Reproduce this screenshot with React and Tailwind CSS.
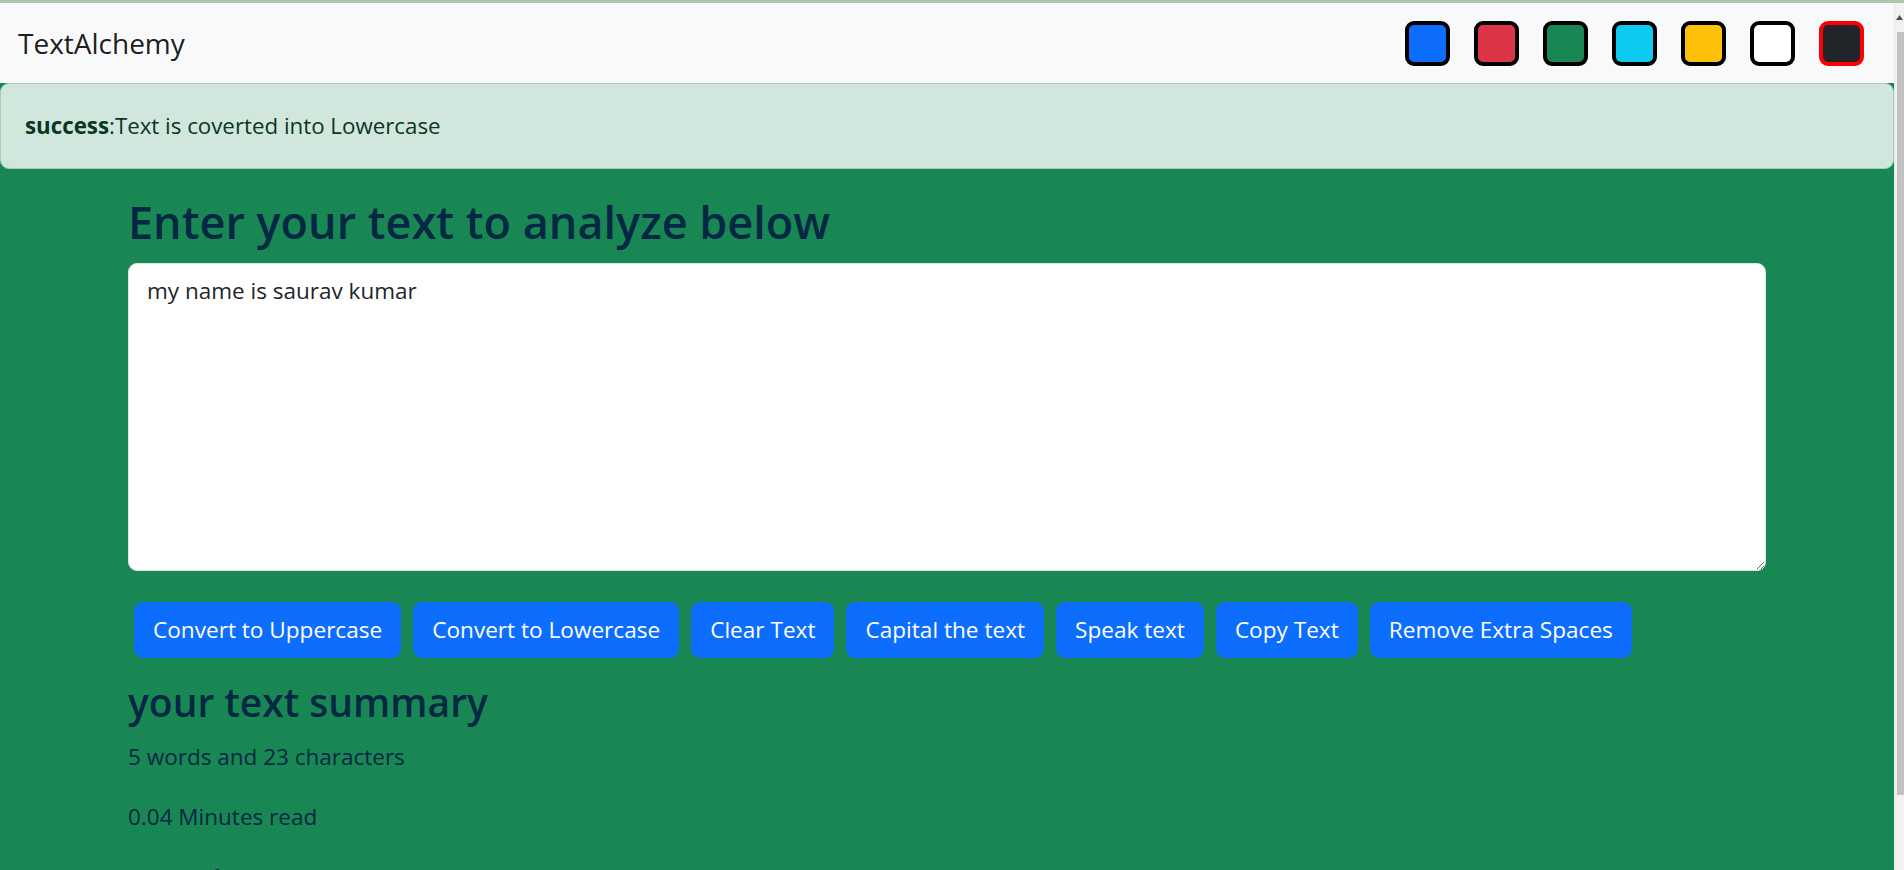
import { useState } from 'react'

const swatches = [
  { name: 'primary', bg: 'bg-[#0d6efd]', border: 'border-black' },
  { name: 'danger', bg: 'bg-[#dc3545]', border: 'border-black' },
  { name: 'success', bg: 'bg-[#198754]', border: 'border-black' },
  { name: 'info', bg: 'bg-[#0dcaf0]', border: 'border-black' },
  { name: 'warning', bg: 'bg-[#ffc107]', border: 'border-black' },
  { name: 'light', bg: 'bg-white', border: 'border-black' },
  { name: 'dark', bg: 'bg-[#212529]', border: 'border-[#ff0000]' },
]

function Navbar() {
  return (
    <nav className="h-[80px] bg-[#f8f9fa] flex items-center px-[18px]">
      <span className="text-[28px] leading-[45px] text-black/90">TextAlchemy</span>
      <div className="ml-auto flex items-center">
        {swatches.map((s) => (
          <div
            key={s.name}
            className={`mx-[12px] w-[45px] h-[45px] rounded-[9px] border-[4px] ${s.bg} ${s.border}`}
          />
        ))}
      </div>
    </nav>
  )
}

function Alert({ type, msg }) {
  if (!msg) return null
  return (
    <div className="h-[86px] border border-[#a3cfbb] bg-[#d1e7dd] rounded-[9px] px-[24px] py-[24px] text-[22.3px] leading-[36px] text-[#0a3622]">
      <strong className="font-bold">{type}</strong>:{msg}
    </div>
  )
}

export default function App() {
  const [text, setText] = useState('my name is saurav kumar')

  const words = text.split(/\s+/).filter((w) => w.length !== 0).length
  const buttons = [
    'Convert to Uppercase',
    'Convert to Lowercase',
    'Clear Text',
    'Capital the text',
    'Speak text',
    'Copy Text',
    'Remove Extra Spaces',
  ]

  return (
    <div className="h-[870px] overflow-hidden bg-[#198754] font-['Open_Sans',sans-serif]">
      <div className="h-[3px] bg-[#abc8ad]" />
      <div className="flex h-[867px]">
        <div className="flex-1 overflow-hidden">
          <Navbar />
          <Alert type="success" msg="Text is coverted into Lowercase" />

          {/* Text form */}
          <div className="w-[1638px] mx-auto mt-[24px] text-[#042743]">
            <h2 className="text-[45px] leading-[57.6px] font-semibold mb-[12px]">Enter your text to analyze below</h2>
            <div className="mb-[25px]">
              <textarea
                value={text}
                onChange={(e) => setText(e.target.value)}
                className="block w-full h-[308px] bg-white text-[#212529] border border-[#dee2e6] rounded-[9px] px-[18px] py-[9px] text-[22.5px] leading-[36px] outline-none"
              />
            </div>
            <div className="flex flex-wrap">
              {buttons.map((b) => (
                <button
                  key={b}
                  className="m-[6px] bg-[#0d6efd] border border-[#0d6efd] text-white rounded-[9px] px-[18px] py-[9px] text-[22.6px] leading-[36px]"
                >
                  {b}
                </button>
              ))}
            </div>
          </div>

          {/* Summary */}
          <div className="w-[1638px] mx-auto mt-[13px] text-[#042743]">
            <h3 className="text-[39px] leading-[50.4px] font-semibold mb-[12px]">your text summary</h3>
            <p className="text-[22.5px] leading-[36px] mb-[24px]">
              {words} words and {text.length} characters
            </p>
            <p className="text-[22.5px] leading-[36px] mb-[24px]">{(0.008 * words).toFixed(2)} Minutes read</p>
            <h3 className="text-[39px] leading-[50.4px] font-semibold mt-[8px] mb-[12px]">Preview</h3>
            <p className="text-[22.5px] leading-[36px]">{text}</p>
          </div>
        </div>

        {/* Scrollbar */}
        <div className="w-[10px] bg-[#f1f1f1] border-l border-[#e6e6e6] flex flex-col">
          <div className="h-[29px] flex items-center justify-end pr-[1px]">
            <svg width="7" height="5" viewBox="0 0 7 5">
              <path d="M3.5 0 L7 5 L0 5 Z" fill="#505050" />
            </svg>
          </div>
          <div className="ml-[2px] h-[763px] bg-[#c1c1c1]" />
        </div>
      </div>
    </div>
  )
}
